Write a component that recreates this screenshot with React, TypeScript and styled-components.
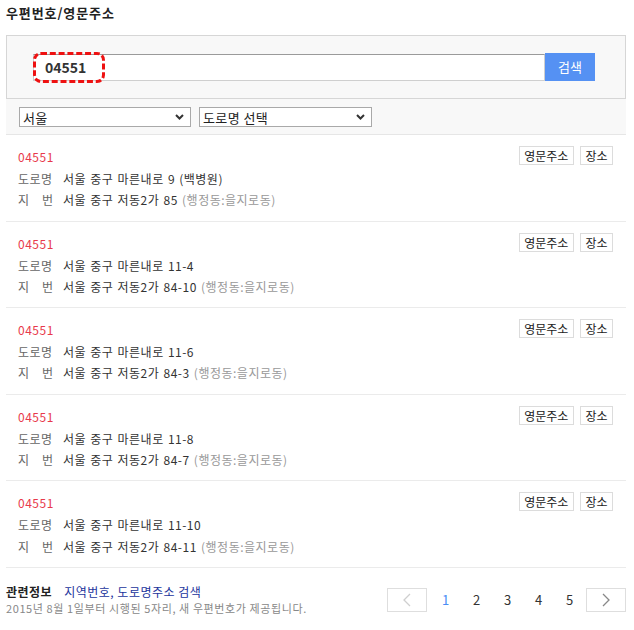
import React from 'react';
import styled, { createGlobalStyle } from 'styled-components';

const GlobalStyle = createGlobalStyle`
  html, body {
    margin: 0;
    padding: 0;
    background: #fff;
  }
  body {
    font-family: "Noto Sans CJK KR", "Noto Sans", sans-serif;
    color: #333;
  }
`;

const SPage = styled.div`
  width: 620px;
  padding: 0 8px 0 6px;
`;

const STitle = styled.h1`
  margin: 0;
  padding-top: 4px;
  height: 31px;
  font-size: 13px;
  line-height: 18px;
  font-weight: 700;
  letter-spacing: 0.9px;
  color: #222;
`;

const SSearchPanel = styled.div`
  display: flex;
  align-items: center;
  height: 62px;
  padding: 0 30px 0 26px;
  border: 1px solid #d6d6d6;
  background: #f8f8f8;
`;

const SInputWrap = styled.div`
  position: relative;
  flex: 1;
  display: flex;
`;

const SInput = styled.div`
  flex: 1;
  height: 25px;
  padding-left: 11px;
  border: 1px solid #cfcfcf;
  border-top-color: #9a9a9a;
  background: #fff;
  font-size: 14px;
  font-weight: 700;
  line-height: 25px;
  color: #333;
`;

const SHighlight = styled.div`
  position: absolute;
  left: 0;
  top: -2px;
  width: 66px;
  height: 25px;
  border: 3px dashed #ee1111;
  border-radius: 8px;
`;

const SSearchButton = styled.button`
  width: 50px;
  height: 28px;
  border: 0;
  background: #5591f3;
  color: #fff;
  font-family: inherit;
  font-size: 13px;
  line-height: 28px;
  padding: 0;
`;

const SFilterBar = styled.div`
  display: flex;
  gap: 8px;
  padding: 8px 13px 7px;
  background: #f8f8f8;
  border-bottom: 1px solid #e6e6e6;
`;

const SSelect = styled.div<{ $width: number }>`
  display: flex;
  align-items: center;
  justify-content: space-between;
  box-sizing: border-box;
  width: ${({ $width }) => $width}px;
  height: 20px;
  padding: 0 6px 0 3px;
  border: 1px solid #a9a9a9;
  background: #fff;
  font-size: 13px;
  letter-spacing: 0.4px;
  color: #222;
`;

const SRow = styled.div`
  display: flex;
  justify-content: space-between;
  align-items: flex-start;
  padding: 11px 13px 10px 12px;
  border-bottom: 1px solid #ebebeb;
`;

const SInfo = styled.div`
  display: flex;
  flex-direction: column;
  font-size: 12px;
  letter-spacing: 0.5px;
  word-spacing: 1px;
`;

const SZip = styled.div`
  line-height: 22px;
  color: #e8394b;
`;

const SLine = styled.div`
  display: flex;
  line-height: 21.3px;
  color: #333;
`;

const SLabel = styled.span`
  width: 45px;
  color: #666;
  white-space: pre;
`;

const SSub = styled.span`
  color: #999;
`;

const SActions = styled.div`
  display: flex;
  gap: 6px;
`;

const SSmallButton = styled.button`
  height: 19px;
  padding: 0 4.5px;
  border: 1px solid #dcdcdc;
  background: #fff;
  font-family: inherit;
  font-size: 12px;
  line-height: 17px;
  color: #222;
`;

const SFooter = styled.div`
  display: flex;
  justify-content: space-between;
  align-items: center;
  padding-top: 15px;
`;

const SRelated = styled.div`
  font-size: 12px;
`;

const SRelatedTitle = styled.div`
  line-height: 17px;
  font-weight: 700;
  letter-spacing: 0.5px;
  color: #222;

  a {
    margin-left: 12px;
    font-weight: 400;
    color: #22349c;
    text-decoration: none;
  }
`;

const SNote = styled.div`
  font-size: 11px;
  line-height: 17px;
  letter-spacing: 0.6px;
  color: #888;
`;

const SPager = styled.div`
  display: flex;
  align-items: center;
`;

const SArrow = styled.button<{ $disabled?: boolean }>`
  display: flex;
  align-items: center;
  justify-content: center;
  width: 40px;
  height: 24px;
  padding: 0;
  border: 1px solid #dedede;
  background: #fff;
  color: ${({ $disabled }) => ($disabled ? '#cfcfcf' : '#888')};
`;

const SPages = styled.div`
  display: flex;
  margin: 0 1px 0 3px;
`;

const SPageNum = styled.span<{ $active?: boolean }>`
  width: 31px;
  text-align: center;
  font-size: 13px;
  line-height: 24px;
  color: ${({ $active }) => ($active ? '#4a8df5' : '#333')};
`;

const Chevron = () => (
  <svg width="9" height="6" viewBox="0 0 9 6">
    <path d="M1 1l3.5 3.5L8 1" fill="none" stroke="#333" strokeWidth="2" />
  </svg>
);

const Arrow = ({ left }: { left?: boolean }) => (
  <svg width="8" height="14" viewBox="0 0 8 14">
    <path
      d={left ? 'M7 1L1 7l6 6' : 'M1 1l6 6-6 6'}
      fill="none"
      stroke="currentColor"
      strokeWidth="1.3"
    />
  </svg>
);

const results = [
  { road: '서울 중구 마른내로 9 (백병원)', jibun: '서울 중구 저동2가 85' },
  { road: '서울 중구 마른내로 11-4', jibun: '서울 중구 저동2가 84-10' },
  { road: '서울 중구 마른내로 11-6', jibun: '서울 중구 저동2가 84-3' },
  { road: '서울 중구 마른내로 11-8', jibun: '서울 중구 저동2가 84-7' },
  { road: '서울 중구 마른내로 11-10', jibun: '서울 중구 저동2가 84-11' },
];

export default function App() {
  return (
    <>
      <GlobalStyle />
      <SPage>
        <STitle>우편번호/영문주소</STitle>
        <SSearchPanel>
          <SInputWrap>
            <SInput>04551</SInput>
            <SHighlight />
          </SInputWrap>
          <SSearchButton>검색</SSearchButton>
        </SSearchPanel>
        <SFilterBar>
          <SSelect $width={172}>
            서울
            <Chevron />
          </SSelect>
          <SSelect $width={173}>
            도로명 선택
            <Chevron />
          </SSelect>
        </SFilterBar>
        {results.map((r, i) => (
          <SRow key={i}>
            <SInfo>
              <SZip>04551</SZip>
              <SLine>
                <SLabel>도로명</SLabel>
                {r.road}
              </SLine>
              <SLine>
                <SLabel>{'지   번'}</SLabel>
                {r.jibun}&nbsp;<SSub>(행정동:을지로동)</SSub>
              </SLine>
            </SInfo>
            <SActions>
              <SSmallButton>영문주소</SSmallButton>
              <SSmallButton>장소</SSmallButton>
            </SActions>
          </SRow>
        ))}
        <SFooter>
          <SRelated>
            <SRelatedTitle>
              관련정보<a href="#">지역번호, 도로명주소 검색</a>
            </SRelatedTitle>
            <SNote>2015년 8월 1일부터 시행된 5자리, 새 우편번호가 제공됩니다.</SNote>
          </SRelated>
          <SPager>
            <SArrow $disabled>
              <Arrow left />
            </SArrow>
            <SPages>
              {[1, 2, 3, 4, 5].map((n) => (
                <SPageNum key={n} $active={n === 1}>
                  {n}
                </SPageNum>
              ))}
            </SPages>
            <SArrow>
              <Arrow />
            </SArrow>
          </SPager>
        </SFooter>
      </SPage>
    </>
  );
}
